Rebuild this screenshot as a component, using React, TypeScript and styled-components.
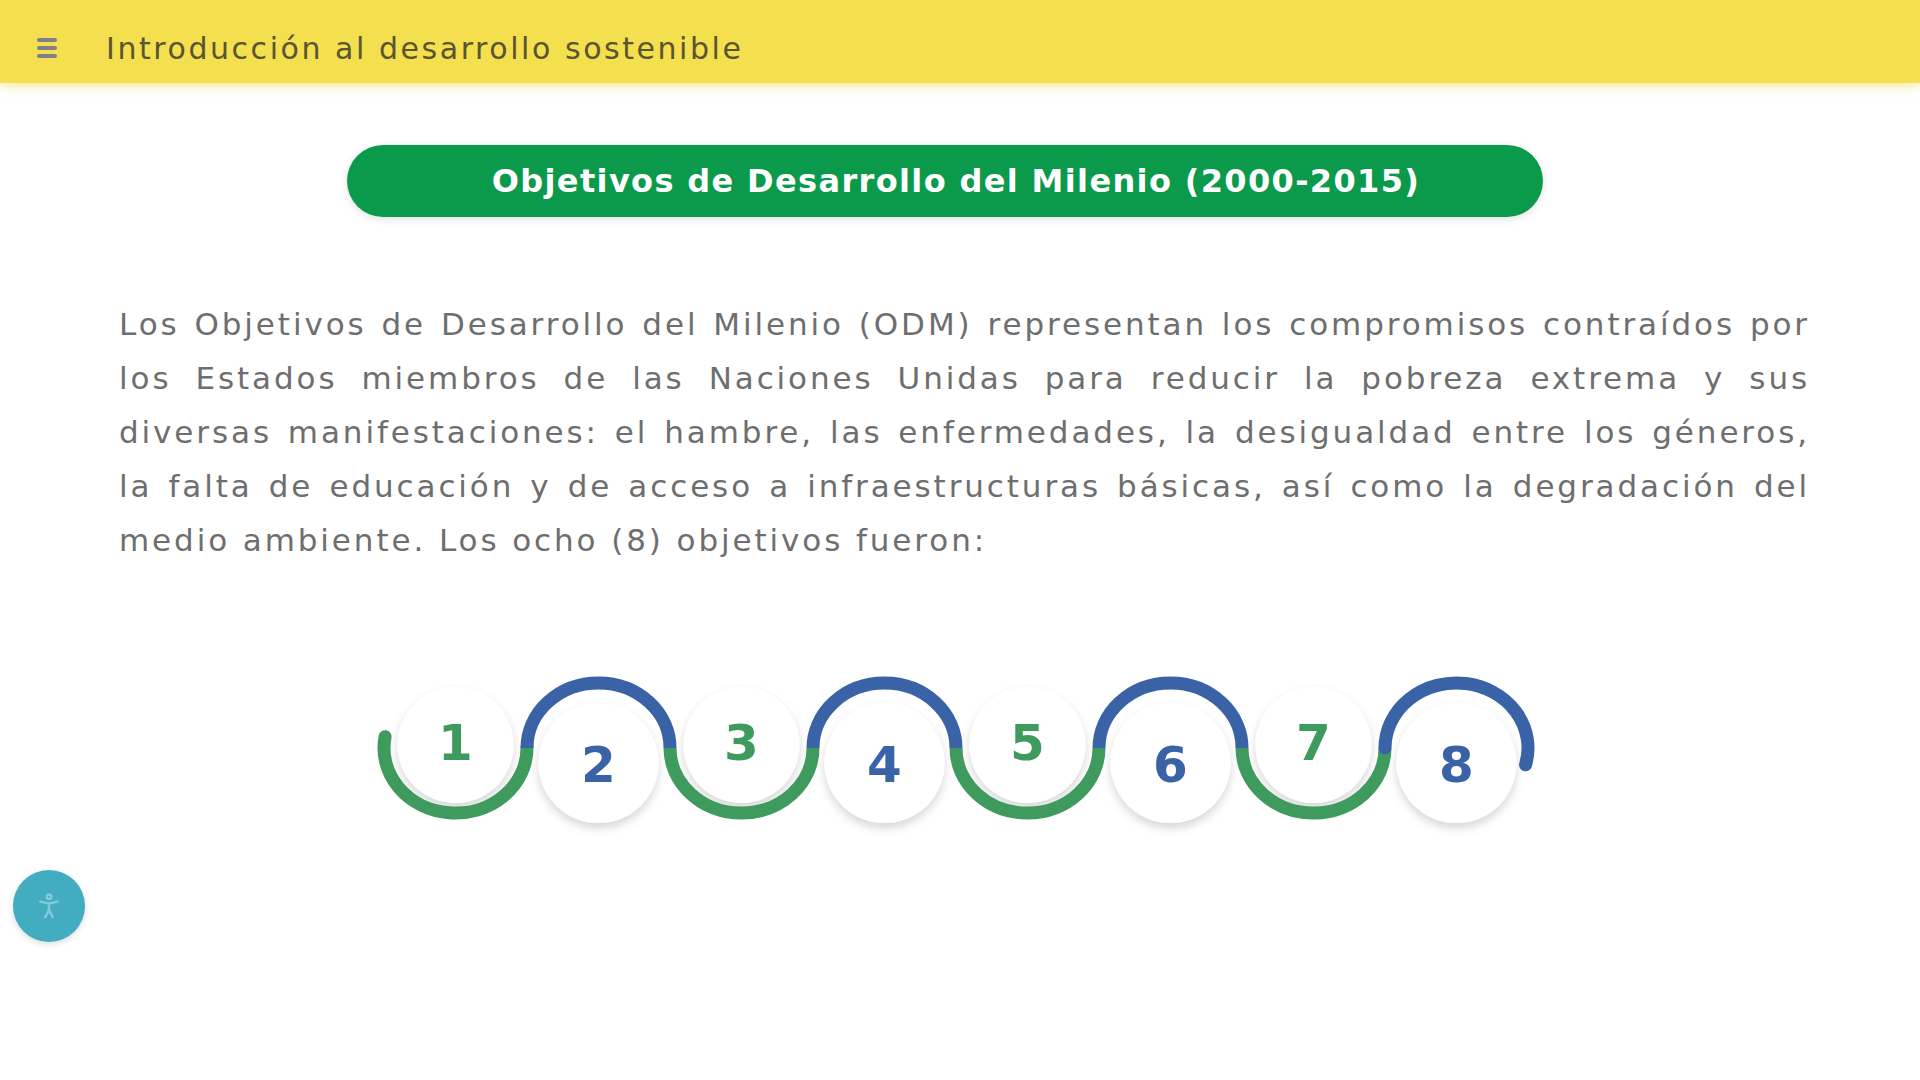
import React from "react";
import styled, { createGlobalStyle } from "styled-components";

const Global = createGlobalStyle`
  html, body { margin: 0; padding: 0; background: #ffffff; }
  body { font-family: "DejaVu Sans", "Liberation Sans", sans-serif; }
`;

const Page = styled.div`
  position: relative;
  min-height: 1080px;
  background: #ffffff;
`;

const Header = styled.header`
  height: 70px;
  padding-top: 13px;
  background: #f4df4e;
  display: flex;
  align-items: center;
  padding-left: 37px;
  box-shadow: 0 3px 10px rgba(240, 215, 70, 0.55);
  position: relative;
  z-index: 1;
`;

const MenuIcon = styled.div`
  width: 20px;
  display: flex;
  flex-direction: column;
  gap: 4px;
  margin-right: 49px;
  & > span {
    display: block;
    height: 4px;
    border-radius: 2px;
    background: #7d8088;
  }
`;

const HeaderTitle = styled.h1`
  margin: 0;
  font-family: "DejaVu Sans", sans-serif;
  font-weight: normal;
  font-size: 30px;
  letter-spacing: 2.55px;
  color: #5a5530;
`;

const Main = styled.main`
  padding: 62px 110px 0 119px;
`;

const Pill = styled.h2`
  margin: 0 0 0 228px;
  width: 1196px;
  height: 72px;
  border-radius: 36px;
  background: #0b9a4b;
  color: #ffffff;
  display: flex;
  align-items: center;
  justify-content: center;
  font-family: "DejaVu Sans", sans-serif;
  font-weight: bold;
  font-size: 32px;
  letter-spacing: 1.35px;
  padding-left: 22px;
  box-sizing: border-box;
  box-shadow: 0 2px 8px rgba(0, 0, 0, 0.12);
`;

const Paragraph = styled.p`
  margin: 80px 0 0 0;
  font-family: "DejaVu Sans", sans-serif;
  font-size: 31px;
  letter-spacing: 2.9px;
  line-height: 54px;
  text-align: justify;
  color: #6e6e6e;
`;

const WaveWrap = styled.div`
  margin-top: 83px;
  display: flex;
  justify-content: center;
`;

const FloatButton = styled.button`
  position: absolute;
  left: 13px;
  top: 870px;
  width: 72px;
  height: 72px;
  border-radius: 50%;
  border: none;
  background: #42adc0;
  display: flex;
  align-items: center;
  justify-content: center;
  box-shadow: 0 2px 6px rgba(0, 0, 0, 0.15);
  padding: 0;
`;

const RX = 71.5;
const RY = 65;
const CY = 98;
const STEP = 143;
const CX0 = 90.5;

const pt = (cx: number, deg: number): [number, number] => {
  const r = (deg * Math.PI) / 180;
  return [cx + RX * Math.cos(r), CY + RY * Math.sin(r)];
};

const f = (n: number) => n.toFixed(2);

function arcPath(i: number): string {
  const cx = CX0 + STEP * i;
  const green = i % 2 === 0;
  let a0: number;
  let a1: number;
  if (green) {
    a0 = i === 0 ? 190 : 180;
    a1 = 0;
  } else {
    a0 = 180;
    a1 = i === 7 ? 375 : 360;
  }
  const [x0, y0] = pt(cx, a0);
  const [x1, y1] = pt(cx, a1);
  const span = Math.abs(a1 - a0);
  const large = span > 180 ? 1 : 0;
  const sweep = green ? 0 : 1;
  return `M ${f(x0)} ${f(y0)} A ${RX} ${RY} 0 ${large} ${sweep} ${f(x1)} ${f(y1)}`;
}

const GREEN = "#3f9a5d";
const BLUE = "#3a62a6";

function Wave() {
  const items = [1, 2, 3, 4, 5, 6, 7, 8];
  return (
    <svg width="1200" height="210" viewBox="0 0 1200 210">
      <defs>
        <filter id="sh" x="-30%" y="-30%" width="160%" height="170%">
          <feDropShadow dx="0" dy="5" stdDeviation="5" floodColor="#000" floodOpacity="0.16" />
        </filter>
      </defs>
      {items.map((n, i) => {
        const odd = i % 2 === 0;
        const cx = CX0 + STEP * i;
        return (
          <circle
            key={"c" + n}
            cx={cx}
            cy={odd ? CY - 3 : CY + 15}
            r={odd ? 58 : 60}
            fill="#ffffff"
            filter="url(#sh)"
          />
        );
      })}
      {items.map((n, i) => (
        <path
          key={"p" + n}
          d={arcPath(i)}
          fill="none"
          stroke={i % 2 === 0 ? GREEN : BLUE}
          strokeWidth={13}
          strokeLinecap={i === 0 || i === 7 ? "round" : "butt"}
        />
      ))}
      {items.map((n, i) => {
        const odd = i % 2 === 0;
        const cx = CX0 + STEP * i;
        return (
          <text
            key={"t" + n}
            x={cx}
            y={odd ? CY - 5 : CY + 17}
            textAnchor="middle"
            dominantBaseline="central"
            fontFamily="'DejaVu Sans', sans-serif"
            fontWeight="bold"
            fontSize="50"
            fill={odd ? GREEN : BLUE}
          >
            {n}
          </text>
        );
      })}
    </svg>
  );
}

export default function App() {
  return (
    <Page>
      <Global />
      <Header>
        <MenuIcon>
          <span />
          <span />
          <span />
        </MenuIcon>
        <HeaderTitle>Introducción al desarrollo sostenible</HeaderTitle>
      </Header>
      <Main>
        <Pill>Objetivos de Desarrollo del Milenio (2000-2015)</Pill>
        <Paragraph>
          Los Objetivos de Desarrollo del Milenio (ODM) representan los compromisos contraídos por los
          Estados miembros de las Naciones Unidas para reducir la pobreza extrema y sus diversas
          manifestaciones: el hambre, las enfermedades, la desigualdad entre los géneros, la falta de
          educación y de acceso a infraestructuras básicas, así como la degradación del medio ambiente.
          Los ocho (8) objetivos fueron:
        </Paragraph>
        <WaveWrap>
          <Wave />
        </WaveWrap>
      </Main>
      <FloatButton aria-label="Accesibilidad">
        <svg width="30" height="30" viewBox="0 0 24 24" fill="none" stroke="rgba(255,255,255,0.35)" strokeWidth="2" strokeLinecap="round">
          <circle cx="12" cy="4.5" r="1.8" />
          <path d="M5 8.5l7 1.5 7-1.5M12 10v5M12 15l-3 6M12 15l3 6" />
        </svg>
      </FloatButton>
    </Page>
  );
}
